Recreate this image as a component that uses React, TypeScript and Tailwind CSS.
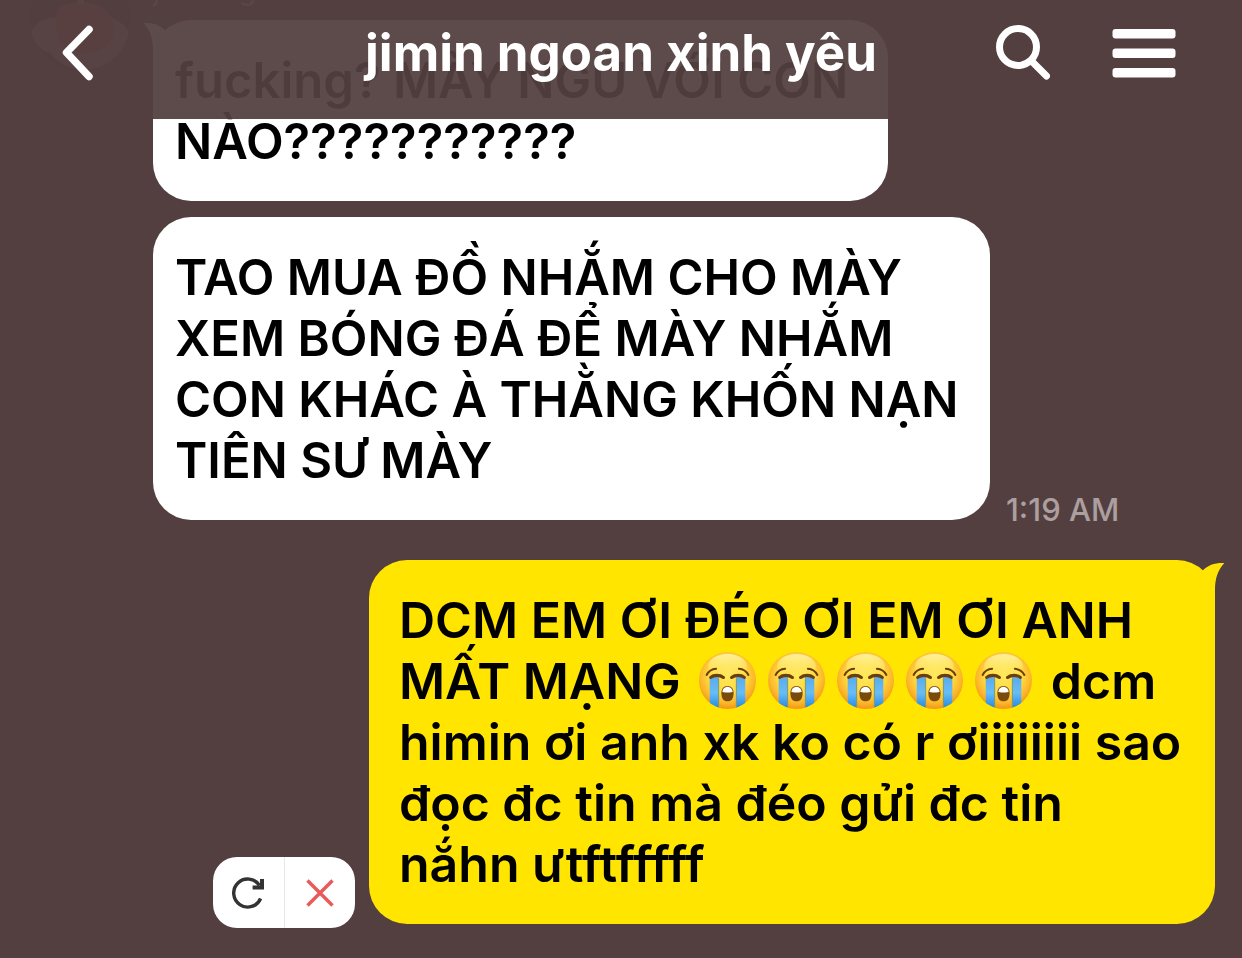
import React from 'react';

type Side = 'left' | 'right';

function BubbleTail({ side }: { side: Side }) {
    return (
        <svg
            aria-hidden="true"
            viewBox="0 0 26 40"
            className={`absolute top-0 w-[26px] h-10 ${side === 'right' ? '-right-[11px] text-[#ffe500]' : '-left-[11px] -scale-x-100 text-white'}`}
        >
            <path d="M2.7 10.5C8 5 15 2.6 24.3 3C18 10 15 18 15 30V40H0V12Z" fill="currentColor" />
        </svg>
    );
}

function CryingFace() {
    return (
        <svg role="img" aria-label="😭" viewBox="0 0 56 56" className="inline-block w-[57px] h-[57px] mx-[6px] align-[-10px]">
            <defs>
                <radialGradient id="face" cx="0.5" cy="0.42" r="0.6">
                    <stop offset="0" stopColor="#ffe75a" />
                    <stop offset="0.55" stopColor="#ffd93f" />
                    <stop offset="0.8" stopColor="#fcb52a" />
                    <stop offset="1" stopColor="#ef9012" />
                </radialGradient>
                <linearGradient id="shine" x1="0" y1="0" x2="0" y2="1">
                    <stop offset="0" stopColor="#fffbc0" stopOpacity="0.75" />
                    <stop offset="1" stopColor="#fff16a" stopOpacity="0" />
                </linearGradient>
                <linearGradient id="tear" x1="0" y1="0" x2="0" y2="1">
                    <stop offset="0" stopColor="#5aaae8" />
                    <stop offset="0.5" stopColor="#68bdf6" />
                    <stop offset="1" stopColor="#1f86e0" />
                </linearGradient>
                <clipPath id="round">
                    <circle cx="28" cy="28" r="28" />
                </clipPath>
            </defs>
            <circle cx="28" cy="28" r="28" fill="url(#face)" />
            <ellipse cx="28" cy="14" rx="19" ry="12" fill="url(#shine)" />
            <g clipPath="url(#round)">
                <path d="M10.5 24H19.5V56H10.5Z" fill="url(#tear)" />
                <path d="M36.5 24H45.5V56H36.5Z" fill="url(#tear)" />
                <path d="M19.3 26V56M36.7 26V56" stroke="#7f9a70" strokeWidth="1" />
            </g>
            <g fill="none" stroke="#6b3f0c" strokeLinecap="round">
                <path d="M7.5 22.5C9.5 18.8 12.5 16.8 16.8 16.5" strokeWidth="2" />
                <path d="M48.5 22.5C46.5 18.8 43.5 16.8 39.2 16.5" strokeWidth="2" />
                <path d="M11.5 25C14.5 22.3 20.5 22.3 24 25" strokeWidth="3" />
                <path d="M44.5 25C41.5 22.3 35.5 22.3 32 25" strokeWidth="3" />
            </g>
            <path d="M28 33.5C32 33.5 34 36.5 34 40.5C34 45.5 32 48.5 28 48.5C24 48.5 22 45.5 22 40.5C22 36.5 24 33.5 28 33.5Z" fill="#7a4a0b" />
            <path d="M28 34.2C31 34.2 32.8 36.3 33.1 39C33.1 40 22.9 40 22.9 39C23.2 36.3 25 34.2 28 34.2Z" fill="#fff" />
        </svg>
    );
}

function Avatar() {
    return (
        <svg role="img" aria-label="Avatar" viewBox="0 0 100 100" className="w-[100px] h-[100px] shrink-0">
            <circle cx="50" cy="50" r="50" fill="#4a3a3c" />
            <path d="M1 62C8 48 24 44 34 52L66 50C78 44 92 50 99 62C94 86 74 100 52 100C38 98 26 92 20 82C12 82 4 74 1 62Z" fill="#a08f8e" />
            <path d="M28 38C40 30 64 30 76 40C86 52 88 68 74 78C58 88 38 84 30 70C24 58 24 46 28 38Z" fill="#a85055" />
            <path d="M48 26H54V34H48Z" fill="#b59a98" />
        </svg>
    );
}

function Bubble({ side, tail, className, children }: { side: Side; tail?: boolean; className: string; children: React.ReactNode }) {
    return (
        <div className={`relative rounded-[38px] pt-[30px] pb-[29px] leading-[61px] font-semibold text-black ${side === 'right' ? 'bg-[#ffe500] px-[30px] text-[50px]' : 'bg-white pl-[22px] pr-4 text-[49px]'} ${className}`}>
            {tail && <BubbleTail side={side} />}
            <p>{children}</p>
        </div>
    );
}

export default function App() {
    return (
        <div className="min-h-screen overflow-hidden bg-[#533f40] font-['Inter','Liberation_Sans',sans-serif]">
            {/* Header */}
            <header className="fixed inset-x-0 top-0 z-10 grid h-[119px] grid-cols-[1fr_auto_1fr] items-center bg-[#533f40]/94 pb-[14px] text-white">
                <button type="button" aria-label="Back" className="ml-[60px] justify-self-start">
                    <svg viewBox="0 0 36 56" className="w-9 h-14" fill="none" stroke="currentColor" strokeWidth="7.5" strokeLinecap="round" strokeLinejoin="round">
                        <path d="M29 4.5L6.5 27.5L29 51.5" />
                    </svg>
                </button>
                <h1 className="text-[51px] leading-[61px] font-bold whitespace-nowrap">jimin ngoan xinh yêu</h1>
                <div className="flex items-center gap-[62px] justify-self-end pr-[66px]">
                    <button type="button" aria-label="Search">
                        <svg viewBox="0 0 54 56" className="w-[54px] h-14" fill="none" stroke="currentColor">
                            <circle cx="22" cy="22" r="18.5" strokeWidth="7" />
                            <path d="M35.5 36L50.5 51" strokeWidth="7" strokeLinecap="round" />
                        </svg>
                    </button>
                    <button type="button" aria-label="Menu">
                        <svg viewBox="0 0 64 50" className="w-16 h-[50px]" fill="currentColor">
                            <rect x="0.5" y="1" width="63" height="9.5" rx="3" />
                            <rect x="0.5" y="20.5" width="63" height="9.5" rx="3" />
                            <rect x="0.5" y="40" width="63" height="9.5" rx="3" />
                        </svg>
                    </button>
                </div>
            </header>

            {/* Conversation, scrolled so that the first message sits under the header */}
            <main className="-mt-[30px] flex flex-col gap-10 pb-[30px]">
                <section className="flex items-start gap-[23px] pl-[30px]">
                    <Avatar />
                    <div className="flex flex-col items-start">
                        <span className="mb-[10px] text-[28px] leading-10 text-white/60">jimin ngoan</span>
                        <Bubble side="left" tail className="mb-4 max-w-[735px]">
                            fucking? MÀY NGỦ VỚI CON NÀO???????????
                        </Bubble>
                        <div className="flex items-end gap-4">
                            <Bubble side="left" className="max-w-[837px]">
                                TAO MUA ĐỒ NHẮM CHO MÀY XEM BÓNG ĐÁ ĐỂ MÀY NHẮM CON KHÁC À THẰNG KHỐN NẠN TIÊN SƯ MÀY
                            </Bubble>
                            <time className="text-[31px] leading-5 font-medium whitespace-nowrap text-[#ac9f9f]">1:19 AM</time>
                        </div>
                    </div>
                </section>

                <section className="flex items-end justify-end gap-[14px] pr-[27px]">
                    <div className="flex h-[71px] w-[142px] shrink-0 overflow-hidden rounded-[24px] bg-white">
                        <button type="button" aria-label="Resend" className="flex flex-1 items-center justify-center border-r border-[#e8e6e6]">
                            <svg viewBox="0 0 32 32" className="w-8 h-8" fill="none" stroke="#333" strokeWidth="3.4">
                                <path d="M28.6 21.5A14 14 0 1 1 27.5 8.5" />
                                <path d="M30 2V10.4H20.6" strokeWidth="4" />
                            </svg>
                        </button>
                        <button type="button" aria-label="Delete" className="flex flex-1 items-center justify-center">
                            <svg viewBox="0 0 28 28" className="w-7 h-7" fill="none" stroke="#e85a5a" strokeWidth="3.4">
                                <path d="M1.5 1.5L26.5 26.5M26.5 1.5L1.5 26.5" />
                            </svg>
                        </button>
                    </div>
                    <Bubble side="right" tail className="mb-1 max-w-[846px]">
                        DCM EM ƠI ĐÉO ƠI EM ƠI ANH MẤT MẠNG <span className="whitespace-nowrap"><CryingFace /><CryingFace /><CryingFace /><CryingFace /><CryingFace /></span> dcm himin ơi anh xk ko có r ơiiiiiiii sao đọc đc tin mà đéo gửi đc tin nắhn ưtftfffff
                    </Bubble>
                </section>
            </main>
        </div>
    );
}
